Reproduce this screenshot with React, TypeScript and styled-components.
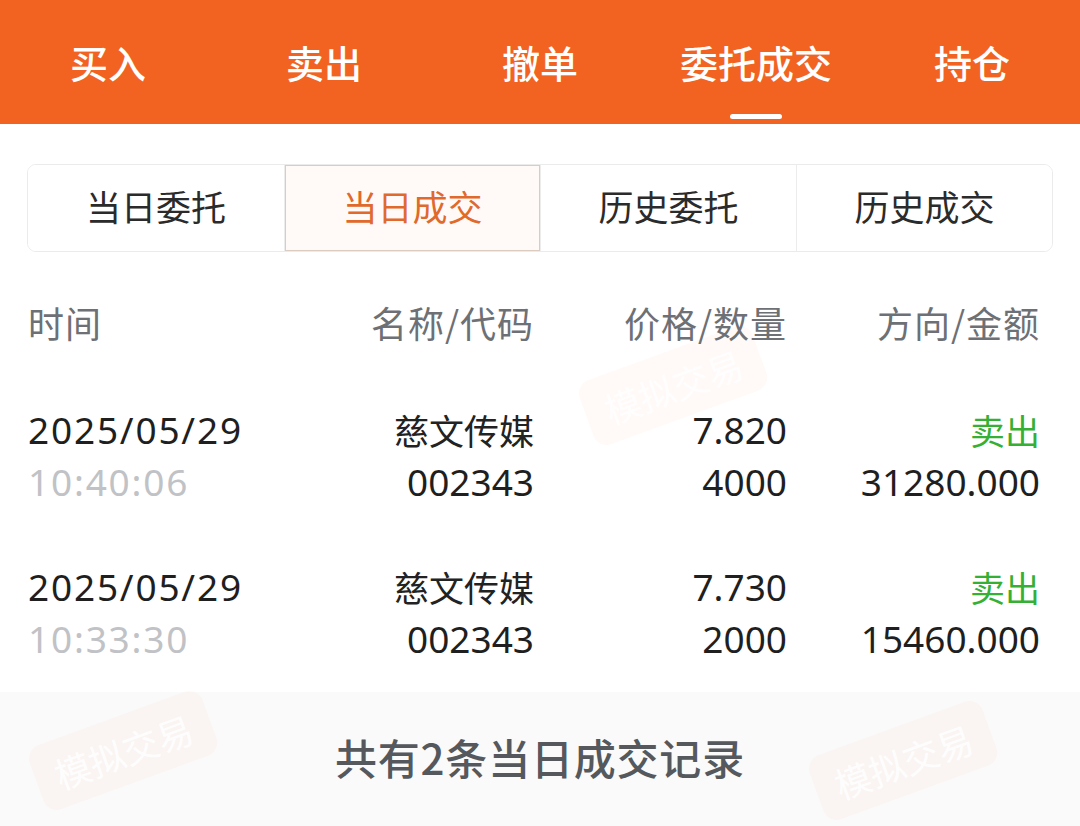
import styled, { createGlobalStyle } from "styled-components";

const GlobalStyle = createGlobalStyle`
  html, body {
    margin: 0;
    padding: 0;
    background: #ffffff;
  }
  body {
    font-family: "Noto Sans", "Noto Sans CJK SC", sans-serif;
    -webkit-font-smoothing: antialiased;
  }
`;

const topTabs = ["买入", "卖出", "撤单", "委托成交", "持仓"];
const segments = ["当日委托", "当日成交", "历史委托", "历史成交"];

const trades = [
  {
    date: "2025/05/29",
    time: "10:40:06",
    name: "慈文传媒",
    code: "002343",
    price: "7.820",
    qty: "4000",
    side: "卖出",
    amount: "31280.000",
  },
  {
    date: "2025/05/29",
    time: "10:33:30",
    name: "慈文传媒",
    code: "002343",
    price: "7.730",
    qty: "2000",
    side: "卖出",
    amount: "15460.000",
  },
];

// faint "simulated trading" badges printed across the page
const badges = [
  { x: 575, y: 385 },
  { x: 25, y: 750 },
  { x: 805, y: 760 },
];

export default function App() {
  return (
    <>
      <GlobalStyle />
      <Page>
        <Header>
          {topTabs.map((t) => (
            <TopTab key={t} $active={t === "委托成交"}>
              {t}
            </TopTab>
          ))}
        </Header>

        <Segmented>
          {segments.map((s) => (
            <Segment key={s} $active={s === "当日成交"}>
              {s}
            </Segment>
          ))}
        </Segmented>

        <HeadRow>
          <HeadCell $align="left">时间</HeadCell>
          <HeadCell>名称/代码</HeadCell>
          <HeadCell>价格/数量</HeadCell>
          <HeadCell>方向/金额</HeadCell>
        </HeadRow>

        {trades.map((r, i) => (
          <DataRow key={i}>
            <Cell $align="left">
              <Num $spaced>{r.date}</Num>
              <Num $spaced $muted>
                {r.time}
              </Num>
            </Cell>
            <Cell>
              <Line>{r.name}</Line>
              <Num>{r.code}</Num>
            </Cell>
            <Cell>
              <Num>{r.price}</Num>
              <Num>{r.qty}</Num>
            </Cell>
            <Cell>
              <Line $green>{r.side}</Line>
              <Num>{r.amount}</Num>
            </Cell>
          </DataRow>
        ))}

        <Footer>共有2条当日成交记录</Footer>

        <MarkText style={{ left: 365, top: 430 }}>东方财富</MarkText>
        {badges.map((b, i) => (
          <MarkBadge key={i} style={{ left: b.x, top: b.y }}>
            模拟交易
          </MarkBadge>
        ))}
      </Page>
    </>
  );
}

const Page = styled.div`
  position: relative;
  width: 1080px;
  height: 826px;
  overflow: hidden;
  background: #ffffff;
  display: flex;
  flex-direction: column;
`;

const Header = styled.div`
  display: grid;
  grid-template-columns: repeat(5, 1fr);
  height: 124px;
  background: #f26322;
  flex-shrink: 0;
`;

const TopTab = styled.div<{ $active?: boolean }>`
  position: relative;
  display: flex;
  align-items: center;
  justify-content: center;
  padding-bottom: 2px;
  color: #ffffff;
  font-family: "Noto Sans CJK SC", sans-serif;
  font-size: 38px;
  font-weight: 500;

  &::after {
    content: "";
    display: ${({ $active }) => ($active ? "block" : "none")};
    position: absolute;
    left: 50%;
    bottom: 5px;
    width: 52px;
    height: 5px;
    margin-left: -26px;
    border-radius: 3px;
    background: #ffffff;
  }
`;

const Segmented = styled.div`
  display: grid;
  grid-template-columns: repeat(4, 1fr);
  height: 88px;
  margin: 40px 27px 0 27px;
  border: 1px solid #ebebeb;
  border-radius: 9px;
  overflow: hidden;
  box-sizing: border-box;
`;

const Segment = styled.div<{ $active?: boolean }>`
  display: flex;
  align-items: center;
  justify-content: center;
  padding-bottom: 5px;
  font-family: "Noto Sans CJK SC", sans-serif;
  font-size: 35px;
  color: ${({ $active }) => ($active ? "#e0692c" : "#2b2b2b")};
  background: ${({ $active }) => ($active ? "#fffaf7" : "#ffffff")};
  box-shadow: ${({ $active }) => ($active ? "inset 0 0 0 1px #dccbbf" : "none")};

  & + & {
    border-left: 1px solid #ececec;
  }
`;

const Grid = styled.div`
  display: grid;
  grid-template-columns: repeat(4, 1fr);
  padding: 0 40px 0 28px;
  position: relative;
  z-index: 1;
`;

const HeadRow = styled(Grid)`
  height: 106px;
  margin-top: 20px;
  align-items: center;
`;

const HeadCell = styled.div<{ $align?: "left" | "right" }>`
  text-align: ${({ $align }) => $align || "right"};
  font-family: "Noto Sans CJK SC", sans-serif;
  font-size: 36px;
  letter-spacing: 1px;
  color: #6d7075;
  padding-bottom: 6px;
`;

const DataRow = styled(Grid)`
  padding-top: 26px;
  padding-bottom: 27px;
`;

const Cell = styled.div<{ $align?: "left" | "right" }>`
  display: flex;
  flex-direction: column;
  align-items: ${({ $align }) => ($align === "left" ? "flex-start" : "flex-end")};
`;

const Line = styled.div<{ $green?: boolean }>`
  height: 52px;
  line-height: 52px;
  font-family: "Noto Sans CJK SC", sans-serif;
  font-size: 35px;
  color: ${({ $green }) => ($green ? "#35b034" : "#222222")};
  white-space: nowrap;
`;

const Num = styled.div<{ $muted?: boolean; $spaced?: boolean }>`
  height: 52px;
  line-height: 52px;
  font-family: "Noto Sans", sans-serif;
  font-size: 37px;
  letter-spacing: ${({ $spaced }) => ($spaced ? "1.8px" : "0")};
  color: ${({ $muted }) => ($muted ? "#c0c2c6" : "#1f1f1f")};
  white-space: nowrap;
`;

const Footer = styled.div`
  flex: 1;
  background: #fafafa;
  padding-top: 40px;
  text-align: center;
  line-height: 50px;
  font-family: "Noto Sans CJK SC", sans-serif;
  font-size: 42px;
  letter-spacing: 0.8px;
  font-weight: 500;
  color: #55585d;
  position: relative;
`;

const MarkText = styled.div`
  position: absolute;
  transform: rotate(-20deg);
  transform-origin: left top;
  font-family: "Noto Sans CJK SC", sans-serif;
  font-size: 46px;
  font-weight: 700;
  color: rgba(0, 0, 0, 0.022);
  pointer-events: none;
  z-index: 2;
  white-space: nowrap;
`;

const MarkBadge = styled.div`
  position: absolute;
  transform: rotate(-20deg);
  transform-origin: left top;
  padding: 8px 20px;
  border-radius: 14px;
  background: rgba(242, 99, 34, 0.03);
  font-family: "Noto Sans CJK SC", sans-serif;
  font-size: 36px;
  color: rgba(255, 255, 255, 0.9);
  pointer-events: none;
  z-index: 0;
  white-space: nowrap;
`;
